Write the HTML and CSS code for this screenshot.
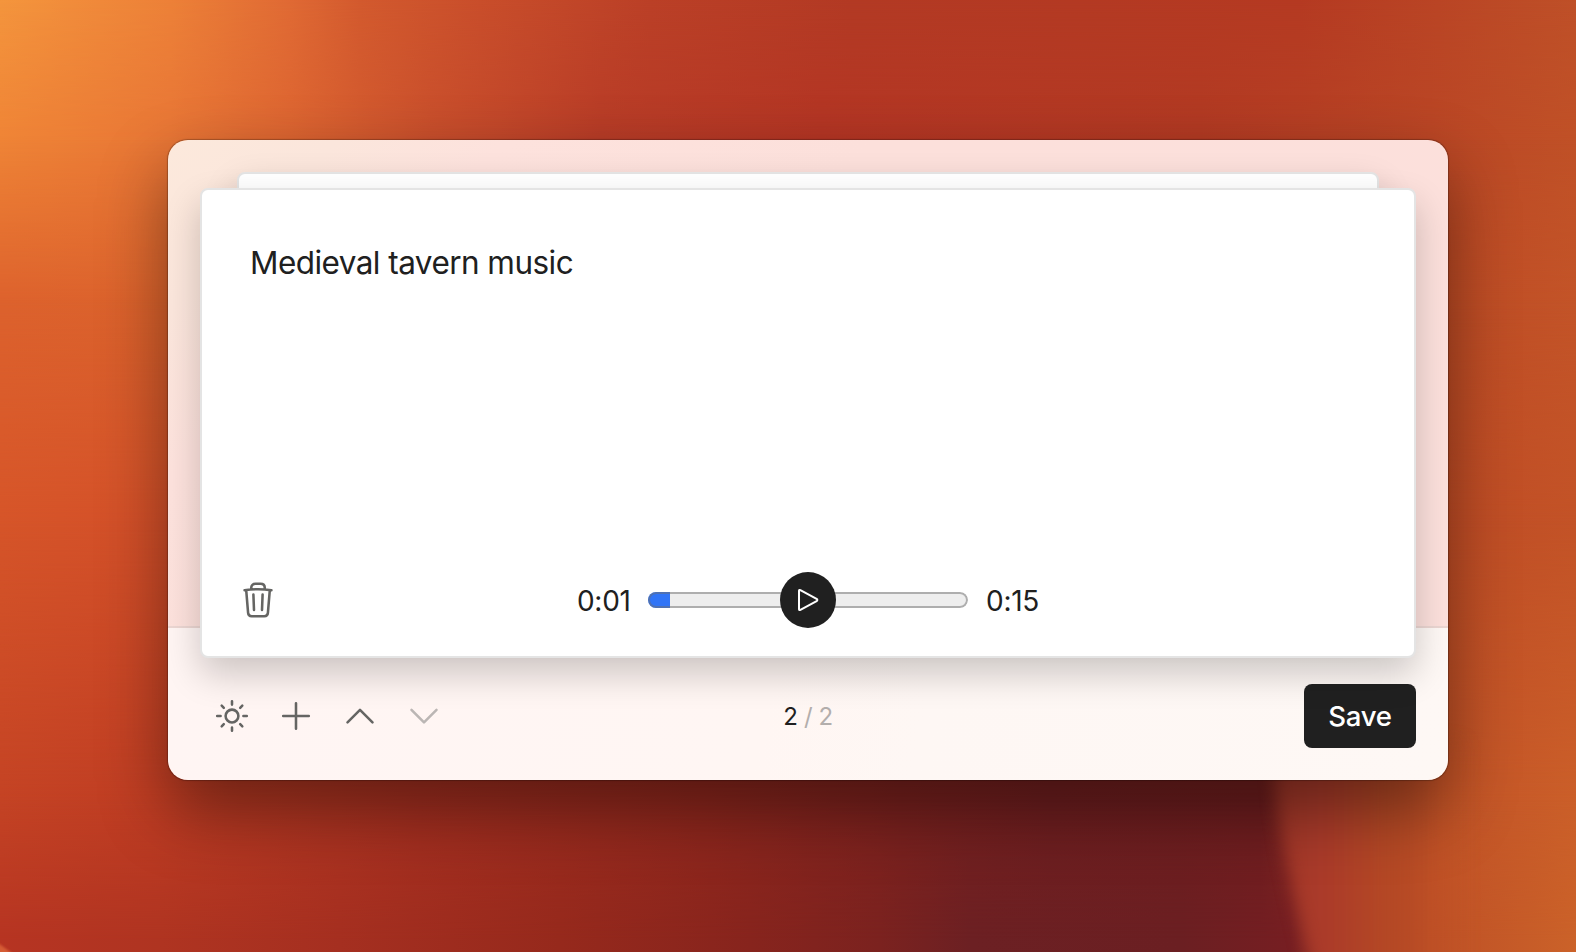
FILE: index.html
```html
<!DOCTYPE html>
<html lang="en">
<head>
<meta charset="utf-8">
<title>Medieval tavern music</title>
<link rel="stylesheet" href="styles.css">
</head>
<body>
<div class="wallpaper">
  <div class="band band-1"></div>
  <div class="band band-2"></div>
  <div class="band band-3"></div>
  <div class="band band-4"></div>
  <div class="band band-5"></div>
  <div class="band band-6"></div>
  <svg class="fold" width="1576" height="952" viewBox="0 0 1576 952">
    <defs>
      <linearGradient id="fold-fill" gradientUnits="userSpaceOnUse" x1="1260" y1="0" x2="1470" y2="0">
        <stop offset="0" stop-color="#9c3528"/>
        <stop offset=".3" stop-color="#ab3b2a"/>
        <stop offset=".6" stop-color="#b64925" stop-opacity=".9"/>
        <stop offset="1" stop-color="#c25426" stop-opacity="0"/>
      </linearGradient>
      <filter id="soft" x="-10%" y="-10%" width="120%" height="120%" color-interpolation-filters="sRGB"><feGaussianBlur stdDeviation="8"/></filter>
      <filter id="slight" x="-20%" y="-20%" width="140%" height="140%"><feGaussianBlur stdDeviation="1"/></filter>
    </defs>
    <path d="M1274 740C1276 830 1292 890 1317 990H1520V740Z" fill="url(#fold-fill)" filter="url(#soft)"/>
    <path d="M-6 940L16 956H-6Z" fill="#d55c36" filter="url(#slight)"/>
  </svg>
</div>
<main class="window">
  <section class="stage"></section>
  <footer class="toolbar">
    <div class="tools">
      <svg class="icon" viewBox="0 0 40 40"><circle cx="20" cy="20" r="6.4"/><path d="M20 5.2V8.6M20 31.4V34.8M5.2 20H8.6M31.4 20H34.8M9.7 9.7L11.8 11.8M28.2 28.2L30.3 30.3M9.7 30.3L11.8 28.2M28.2 11.8L30.3 9.7"/></svg>
      <svg class="icon" viewBox="0 0 40 40"><path d="M20 7.2V32.8M7.2 20H32.8"/></svg>
      <svg class="icon" viewBox="0 0 40 40"><path d="M7.5 26.4L20 13.8L32.5 26.4"/></svg>
      <svg class="icon is-disabled" viewBox="0 0 40 40"><path d="M7.5 13.8L20 26.4L32.5 13.8"/></svg>
    </div>
    <div class="counter">2 <span class="total">/ 2</span></div>
    <button class="save">Save</button>
  </footer>
  <div class="card card-back"></div>
  <article class="card card-front">
    <p class="prompt">Medieval tavern music</p>
    <div class="controls">
      <svg class="icon trash" viewBox="0 0 40 40"><path d="M6.6 10.2C15 9 25 9 33.4 10.2M13.2 9.2V8C13.2 5.3 15 3.8 17.5 3.8H22.5C25 3.8 26.8 5.3 26.8 8V9.2M8.2 10.2L10.1 32.9C10.3 35.3 11.4 36.2 13.6 36.2H26.4C28.6 36.2 29.7 35.3 29.9 32.9L31.8 10.2M15.4 14.6L16 30M24.6 14.6L24 30"/></svg>
      <div class="player">
        <span class="time">0:01</span>
        <div class="seek">
          <div class="track"><div class="elapsed"></div></div>
          <button class="play" aria-label="Play"><svg width="56" height="56" viewBox="0 0 56 56"><path d="M19 18.8V37.2C19 38 19.6 38.3 20.4 37.9L36.6 29.1C37.6 28.5 37.6 27.5 36.6 26.9L20.4 18.1C19.6 17.7 19 18 19 18.8Z"/></svg></button>
        </div>
        <span class="time time-end">0:15</span>
      </div>
    </div>
  </article>
</main>
</body>
</html>
```

FILE: styles.css
```css
* { box-sizing: border-box; }

body {
  margin: 0;
  width: 1576px;
  height: 952px;
  overflow: hidden;
  position: relative;
  display: flex;
  align-items: flex-start;
  padding: 140px 128px 0 168px;
  font-family: Inter, "Liberation Sans", sans-serif;
  color: #202020;
}

/* Desktop wallpaper: horizontal gradients cross-faded down the screen */
.wallpaper, .band, .fold { position: absolute; inset: 0; }
.band-1 { background: linear-gradient(90deg, #f4953d 0, #ed8138 170px, #e06a34 290px, #d35a2e 360px, #c94e2b 480px, #bb4027 650px, #b33a24 850px, #b53a22 1300px, #bf5028 1576px); }
.band-2 {
  background: linear-gradient(90deg, #ef8436 0, #e87636 170px, #dd6531 290px, #c94f2c 430px, #b83c27 600px, #b43524 820px, #b23a23 1200px, #ba4625 1430px, #c05127 1576px);
  mask-image: linear-gradient(180deg, transparent 0, #000 140px);
}
.band-3 {
  background: linear-gradient(90deg, #dd622d 0, #db632c 180px, #b43825 620px, #bd4a24 1430px, #c35428 1576px);
  mask-image: linear-gradient(180deg, transparent 140px, #000 300px);
}
.band-4 {
  background: linear-gradient(90deg, #d65529 0, #d34f29 180px, #a83020 700px, #bf4b25 1430px, #c35327 1576px);
  mask-image: linear-gradient(180deg, transparent 300px, #000 520px);
}
.band-5 {
  background: linear-gradient(90deg, #c44324 0, #bf3d23 150px, #a52f20 420px, #8f271d 700px, #7a211e 900px, #6f1e1f 1050px, #6d1d1e 1260px, #c25327 1440px, #cb5f29 1576px);
  mask-image: linear-gradient(180deg, transparent 520px, #000 800px);
}
.band-6 {
  background: linear-gradient(90deg, #b63422 0, #af3421 160px, #a52f20 340px, #96291c 560px, #87241d 750px, #7b221f 880px, #6c2023 970px, #6b1f22 1180px, #761e22 1290px, #be5026 1430px, #cb6229 1576px);
  mask-image: linear-gradient(180deg, transparent 800px, #000 940px);
}

.window {
  position: relative;
  width: 1280px;
  height: 640px;
  display: grid;
  grid-template-rows: 486px 154px;
  border-radius: 20px;
  box-shadow: 0 0 1px .5px rgba(0, 0, 0, .25), 0 30px 68px rgba(0, 0, 0, .42);
}
.stage {
  border-radius: 20px 20px 0 0;
  background: linear-gradient(135deg, #fce9dc 0, #fbe6dc 120px, #fde2dd 240px, #fce0db 500px, #fce0dc 100%);
}
.toolbar {
  border-top: 2px solid #ebd6d2;
  border-radius: 0 0 20px 20px;
  background: linear-gradient(100deg, #fff5f3 0, #fff6f3 600px, #fef7f4 760px, #fef8f5 100%);
  display: grid;
  grid-template-columns: 1fr auto 1fr;
  align-items: center;
  padding: 24px 32px 0 44px;
}
.tools { display: flex; gap: 24px; }
.icon {
  width: 40px;
  height: 40px;
  fill: none;
  stroke: #656563;
  stroke-width: 2.55;
  stroke-linecap: round;
  stroke-linejoin: round;
}
.is-disabled { stroke: #bbb6b4; }
.counter {
  font-size: 24px;
  line-height: 32px;
  letter-spacing: -.4px;
  margin-left: -12px;
  padding-top: 2px;
}
.total { color: #b3aeac; }
.save {
  justify-self: end;
  width: 112px;
  height: 64px;
  padding: 0;
  border: 0;
  border-radius: 8px;
  background: #202020;
  color: #fff;
  font: 500 27.6px/64px Inter, "Liberation Sans", sans-serif;
  letter-spacing: -.3px;
}

/* Cards are stacked over both the stage and the toolbar */
.card {
  position: absolute;
  background: #fff;
  border: 2px solid #e4e4e4;
  border-radius: 8px;
  box-shadow: 0 16px 36px rgba(0, 0, 0, .2);
}
.card-back { left: 69px; top: 32px; width: 1142px; height: 440px; }
.card-front {
  left: 32px;
  top: 48px;
  width: 1216px;
  height: 470px;
  padding: 51px 36px 28px;
  display: flex;
  flex-direction: column;
  justify-content: space-between;
}
.prompt {
  margin: 0 0 0 12px;
  font-size: 31.5px;
  line-height: 43px;
  letter-spacing: -.55px;
}
.controls {
  display: grid;
  grid-template-columns: 40px 1fr 40px;
  align-items: center;
}
.player { display: flex; justify-content: center; align-items: center; }
.time {
  width: 71px;
  font-size: 28px;
  line-height: 54px;
  padding-top: 2px;
  letter-spacing: -.3px;
}
.time-end { text-align: right; }
.seek { width: 320px; display: grid; place-items: center; }
.seek > * { grid-area: 1 / 1; }
.track {
  position: relative;
  width: 320px;
  height: 16px;
  border-radius: 8px;
  background: #eee;
  overflow: hidden;
}
.track::after {
  content: "";
  position: absolute;
  inset: 0;
  border: 2px solid rgba(110, 110, 110, .5);
  border-radius: 8px;
}
.elapsed { width: 22px; height: 16px; background: #3074f6; }
.play {
  position: relative;
  width: 56px;
  height: 56px;
  padding: 0;
  border: 0;
  border-radius: 50%;
  background: #202020;
}
.play svg { display: block; fill: none; stroke: #fff; stroke-width: 2; stroke-linejoin: round; }
```
